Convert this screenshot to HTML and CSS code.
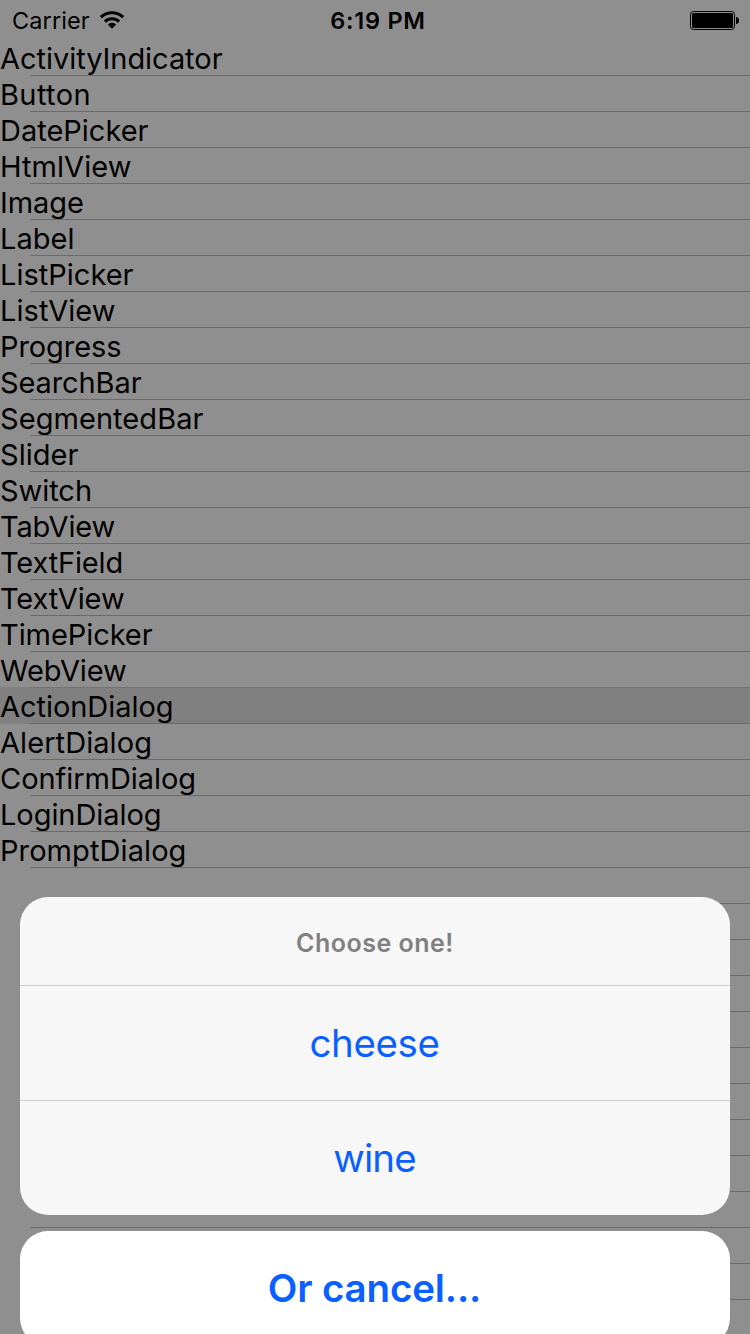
FILE: index.html
```
<!DOCTYPE html>
<html lang="en">
<head>
<meta charset="utf-8">
<title>Components</title>
<link rel="stylesheet" href="styles.css">
</head>
<body>
<div class="screen">
  <header class="status">
    <div class="status-left">
      <span class="carrier">Carrier</span>
      <svg class="wifi" width="26" height="20" viewBox="0 0 26 20">
        <path d="M1.8 7.2 A16.2 16.2 0 0 1 24.2 7.2" fill="none" stroke="#000" stroke-width="3.1"/>
        <path d="M5.9 11.6 A10.4 10.4 0 0 1 20.1 11.6" fill="none" stroke="#000" stroke-width="3"/>
        <path d="M13 18.8 L8.8 14.4 A6.2 6.2 0 0 1 17.2 14.4 Z"/>
      </svg>
    </div>
    <span class="time">6:19 PM</span>
    <svg class="battery" width="50" height="20" viewBox="0 0 50 20">
      <rect x="0.5" y="0.5" width="44" height="18" rx="3" fill="none" stroke="#000"/>
      <rect x="2" y="2" width="41" height="15" rx="1.5"/>
      <path d="M46 6 H46.5 Q49 6.5 49 9.5 Q49 12.5 46.5 13 H46 Z"/>
    </svg>
  </header>
  <ul class="list" id="list"></ul>
</div>
<div class="sheet">
  <section class="options">
    <h1 class="title"><span>Choose one!</span></h1>
    <button class="option"><span class="cheese">cheese</span></button>
    <button class="option"><span class="wine">wine</span></button>
  </section>
  <button class="cancel"><span>Or cancel...</span></button>
</div>
<script src="list.js"></script>
</body>
</html>
```
FILE: styles.css
```
* { box-sizing: border-box; }
html, body { margin: 0; height: 1334px; overflow: hidden; }
body {
  position: relative;
  width: 750px;
  background: #8f8f8f;
  color: #000;
  font-family: Inter, "Liberation Sans", sans-serif;
}
.screen { height: 1334px; overflow: hidden; }
.status {
  display: grid;
  grid-template-columns: 1fr auto 1fr;
  align-items: center;
  height: 40px;
  padding: 0 10px 0 12px;
}
.status-left { display: flex; align-items: center; gap: 9px; }
.carrier { font-size: 23.5px; letter-spacing: 0.1px; }
.time { padding-left: 4px; font-size: 23.5px; font-weight: 600; letter-spacing: 0.75px; }
.battery { justify-self: end; margin-top: 1px; }
.list { margin: 0; padding: 0; list-style: none; }
.row {
  position: relative;
  height: 36px;
  font-size: 29px;
  line-height: 37px;
  white-space: nowrap;
}
.row::after {
  content: "";
  position: absolute;
  left: 30px;
  right: 0;
  bottom: 0;
  height: 1px;
  background: #6a6a6a;
}
.selected {
  background: linear-gradient(#727272, #727272) 30px 0 / 100% 1px no-repeat #808080;
  margin-top: -1px;
  height: 37px;
  padding-top: 1px;
}
.sheet {
  position: absolute;
  top: 897px;
  left: 20px;
  width: 710px;
  display: flex;
  flex-direction: column;
  gap: 16px;
}
.options { background: #f7f7f7; border-radius: 28px; overflow: hidden; }
.title {
  display: flex;
  align-items: center;
  justify-content: center;
  height: 88px;
  margin: 0;
  padding-top: 3px;
  color: #808080;
  font-size: 25px;
  font-weight: 600;
  letter-spacing: 0.5px;
}
.option, .cancel {
  display: flex;
  align-items: center;
  justify-content: center;
  width: 100%;
  height: 115px;
  padding: 0 1px 0 0;
  border: 0;
  background: none;
  color: #0a60ff;
  font: 400 38.5px Inter, "Liberation Sans", sans-serif;
}
.option { border-top: 1px solid #cdcdcd; letter-spacing: -0.4px; }
.wine { letter-spacing: -0.9px; }
.cancel {
  padding-bottom: 2px;
  background: #fff;
  border-radius: 28px;
  font-weight: 600;
  letter-spacing: -0.15px;
}
```
FILE: list.js
```
const items = [
  ["ActivityIndicator", 222], ["Button", 90.5], ["DatePicker", 148], ["HtmlView", 131],
  ["Image", 83.5], ["Label", 74], ["ListPicker", 133], ["ListView", 115],
  ["Progress", 121], ["SearchBar", 141], ["SegmentedBar", 203], ["Slider", 78],
  ["Switch", 91.5], ["TabView", 114.5], ["TextField", 122.5], ["TextView", 124],
  ["TimePicker", 152], ["WebView", 126], ["ActionDialog", 173], ["AlertDialog", 151.5],
  ["ConfirmDialog", 195.5], ["LoginDialog", 161], ["PromptDialog", 186]
];
const list = document.getElementById("list");
for (let i = 0; i < 36; i++) {
  const row = document.createElement("li");
  row.className = items[i] && items[i][0] === "ActionDialog" ? "row selected" : "row";
  if (items[i]) {
    const label = document.createElement("span");
    label.textContent = items[i][0];
    row.append(label);
    list.append(row);
    const extra = items[i][1] + 0.5 - label.getBoundingClientRect().width;
    label.style.letterSpacing = extra / items[i][0].length + "px";
  }
  list.append(row);
}
```
